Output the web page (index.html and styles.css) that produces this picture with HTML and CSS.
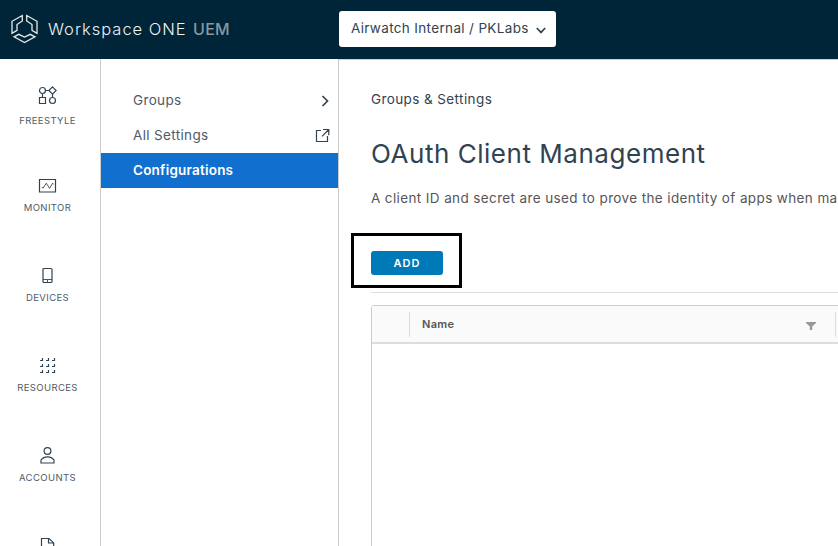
FILE: index.html
```html
<!DOCTYPE html>
<html lang="en">
<head>
<meta charset="utf-8">
<title>Workspace ONE UEM</title>
<link rel="stylesheet" href="styles.css">
</head>
<body>
<header class="topbar">
  <div class="brand">
    <svg class="logo" width="30" height="30" viewBox="0 0 30 30"><path d="M12.300 1.500 2 7.300V19.300l5-3V10.500l5.300-3.500zM16.700 1.500 27 7.300V19.300l-5-3V10.500l-5.300-3.500zM4 22.800l4.800-2.500 5.700 2.800 5.700-2.800 4.800 2.500-10.500 5.800z"/></svg>
    <span class="product">Workspace ONE</span><span class="suffix">UEM</span>
  </div>
  <button class="org"><span class="org-name">Airwatch Internal / PKLabs</span><svg width="10" height="7" viewBox="0 0 10 7"><path d="m.8 1 4.200 4.400L9.200 1"/></svg></button>
</header>
<div class="shell">
  <nav class="rail">
    <a class="rail-item first"><svg width="20" height="20" viewBox="0 0 20 20"><circle cx="4.500" cy="4.500" r="3"/><path d="m14.500.9 3.600 3.600-3.600 3.600-3.600-3.600zM7.500 4.500H11M4.500 7.500v4M14.500 8v3.500M1.500 11.500h6v6h-6z"/><circle cx="14.500" cy="14.500" r="3"/></svg><span>FREESTYLE</span></a>
    <a class="rail-item"><svg width="20" height="20" viewBox="0 0 20 20"><path d="M1.500 3.500h16v12.500h-16z"/><path class="thin" d="m3.700 11.200 1.400.9 3.200-4.900 3.300 5.200 3-5.200 1 1.100"/></svg><span>MONITOR</span></a>
    <a class="rail-item"><svg width="20" height="20" viewBox="0 0 20 20"><rect x="5" y="2.500" width="9" height="14" rx="1"/><path class="thin" d="M5 13.500h9M9.500 14v2.300"/></svg><span>DEVICES</span></a>
    <a class="rail-item"><svg width="20" height="20" viewBox="0 0 20 20"><path class="dots" d="M2 4.500h2.500V2M8 4.500h2.500V2M14 4.500h2.500V2M2 10.500h2.500V8M8 10.500h2.500V8M14 10.500h2.500V8M2 16.500h2.500V14M8 16.500h2.500V14M14 16.500h2.500V14"/></svg><span>RESOURCES</span></a>
    <a class="rail-item"><svg width="20" height="20" viewBox="0 0 20 20"><circle cx="9.500" cy="5" r="3.400"/><path d="M3 17V14c3-4.200 10-4.200 13 0v3z"/></svg><span>ACCOUNTS</span></a>
    <a class="rail-item"><svg width="20" height="20" viewBox="0 0 20 20"><path d="M3.500 18V2.500H11l4.700 4.400V18zM10.500 2.500V7h5"/></svg></a>
  </nav>
  <aside class="menu">
    <a class="menu-item"><span>Groups</span><svg class="chevron" width="9" height="12" viewBox="0 0 9 12"><path d="m1.500 1 5 5-5 5"/></svg></a>
    <a class="menu-item"><span>All Settings</span><svg width="15" height="15" viewBox="0 0 15 15"><path d="M6 2.500H1.500v11h11V8M8 1.500h5.800v5.800M13.800 1.500 7 8.300"/></svg></a>
    <a class="menu-item active"><span>Configurations</span></a>
  </aside>
  <main class="content">
    <div class="crumb">Groups &amp; Settings</div>
    <h1>OAuth Client Management</h1>
    <p class="lead"><span>A client ID and secret are used to prove the identity of apps when ma</span></p>
    <div class="highlight"><button class="add">ADD</button></div>
    <hr>
    <section class="grid">
      <div class="grid-head">
        <div class="select-col"></div>
        <div class="name-col"><span>Name</span><svg width="10" height="8" viewBox="0 0 10 8"><path d="M0 0h10v1L6.200 4.500V8H3.800V4.500L0 1z"/></svg></div>
        <div class="next-col"></div>
      </div>
    </section>
  </main>
</div>
</body>
</html>
```

FILE: styles.css
```css
* { box-sizing: border-box; }
body { margin: 0; height: 546px; overflow: hidden; background: #fff; color: #314351; font-family: Inter, "Liberation Sans", sans-serif; }
button { font: inherit; border: 0; padding: 0; }
svg { display: block; flex: none; fill: none; stroke: #314351; stroke-width: 1.2; }
span { white-space: nowrap; }
.topbar { height: 59px; display: flex; background: #002538; }
.brand { width: 339px; height: 57px; padding-left: 10px; display: flex; align-items: center; font-size: 16.5px; color: #eef3f5; font-weight: 300; }
.logo { stroke: #e5eaed; stroke-width: 1.3; margin-right: 8px; }
.product { width: 145px; letter-spacing: 1px; }
.suffix { color: #8799a3; font-weight: 500; font-size: 16px; letter-spacing: .3px; }
.org { margin-top: 11px; width: 217px; height: 36px; padding: 0 10px 3px 12px; display: flex; align-items: center; justify-content: space-between; background: #fff; border-radius: 3px; color: #314351; font-size: 13.5px; letter-spacing: .34px; }
.org svg { margin-top: 6px; stroke-width: 1.7; }
.shell { display: flex; height: 487px; }
.rail { width: 101px; border-right: 1px solid #ccc; padding-top: 27px; overflow: hidden; }
.rail-item { height: 90px; margin-right: 5px; display: flex; flex-direction: column; align-items: center; gap: 6px; color: #4e5b68; font-size: 9.5px; line-height: 12px; letter-spacing: .4px; }
.rail-item.first { gap: 9px; }
.rail .thin { stroke-width: .9; }
.rail .dots { stroke-width: 1.2; }
.menu { width: 238px; border-right: 1px solid #ccc; padding-top: 24px; }
.menu-item { height: 35px; padding: 0 8px 0 32px; display: flex; align-items: center; justify-content: space-between; font-size: 13.5px; letter-spacing: .35px; color: #4e5b68; }
.menu-item span { margin-top: -2px; }
.menu .chevron { stroke-width: 1.7; }
.menu-item.active { background: #1170cf; color: #fff; font-weight: 600; letter-spacing: .22px; }
.content { flex: 1; min-width: 0; padding-left: 32px; overflow: hidden; border-top: 1px solid #ccd1d4; }
.crumb { margin-top: 29px; height: 20px; line-height: 20px; font-size: 13.5px; letter-spacing: .4px; }
h1 { margin: 27px 0 0; height: 36px; line-height: 36px; font-size: 26px; font-weight: 400; letter-spacing: .53px; }
.lead { margin: 16px 0 0; height: 20px; line-height: 20px; font-size: 13.5px; letter-spacing: .38px; color: #565656; }
.highlight { margin: 25px 0 0 -20px; width: 111px; height: 55px; border: 3px solid #000; padding: 15px 17px; }
.add { display: block; width: 72px; height: 24px; background: #0079b8; border-radius: 3px; color: #fff; font-size: 11px; font-weight: 600; letter-spacing: 1px; line-height: 24px; }
hr { margin: 4px 0 0; border: 0; height: 1px; background: #ddd; }
.grid { margin-top: 12px; width: 600px; height: 300px; border: 1px solid #ccc; border-radius: 3px; }
.grid-head { height: 38px; display: flex; align-items: center; background: #fafafa; border-bottom: 2px solid #ddd; }
.select-col { width: 38px; height: 25px; border-right: 1px solid #ddd; }
.name-col { width: 426px; height: 25px; padding: 0 19px 0 12px; display: flex; align-items: center; justify-content: space-between; border-right: 1px solid #ddd; color: #565656; font-size: 11px; font-weight: 600; letter-spacing: .3px; }
.name-col svg { fill: #999; stroke: none; margin-top: 3px; }
```
